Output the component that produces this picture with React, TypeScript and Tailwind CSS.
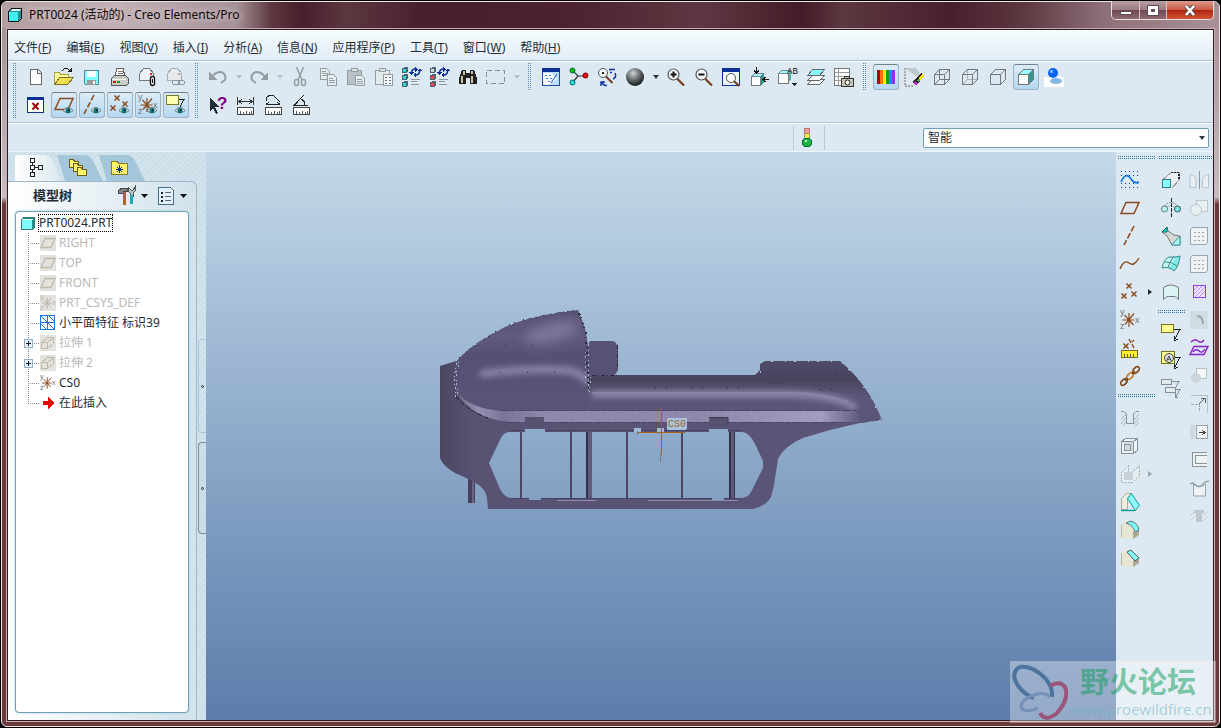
import type { ReactNode } from "react";

const BROWN = "#8b4a1c";
const SANS = "Liberation Sans, sans-serif";

function Glyph({ children, size = 20 }: { children: ReactNode; size?: number }) {
  return (
    <svg
      width={size}
      height={size}
      viewBox={`0 0 ${size} ${size}`}
      fill="none"
      shapeRendering="crispEdges"
      className="shrink-0 overflow-visible"
      aria-hidden="true"
    >
      {children}
    </svg>
  );
}

/* Small pieces shared by several icons */

function Eye() {
  return (
    <g shapeRendering="auto">
      <path d="M9 15.5q5-6 10 0q-5 5-10 0z" fill="#e8f4fa" stroke="#555" strokeWidth=".8" />
      <circle cx="14" cy="15.5" r="2.6" fill="#007a78" />
      <path d="M14 14.5h1.5v1.5h-1.5z" fill="#002" />
    </g>
  );
}

function Cross({ x, y }: { x: number; y: number }) {
  return (
    <path
      d={`M${x - 2.5} ${y - 2.5}l5 5m0-5l-5 5`}
      stroke={BROWN}
      strokeWidth="1.5"
      shapeRendering="auto"
    />
  );
}

function Ruler() {
  return (
    <g>
      <path d="M1.5 12.5h16v7h-16z" fill="#fff" stroke="#444" />
      <path d="M4.5 16v3M7.5 17v2M10.5 16v3M13.5 17v2M15.5 16v3" stroke="#555" />
    </g>
  );
}

function Csys({ gray = false }: { gray?: boolean }) {
  const c = gray ? "#b9b6a4" : BROWN;
  const t = gray ? "#b9b6a4" : "#68747c";
  return (
    <g shapeRendering="auto">
      <path d="M9 3v14M2.5 10h12M4.5 5l9 10M14 3.5l-9 11" stroke={c} strokeWidth="1.2" />
      <g fill={t} fontSize="9" fontFamily={SANS}>
        <text x="0" y="5">y</text>
        <text x="15" y="13">x</text>
        <text x="0" y="19">z</text>
      </g>
    </g>
  );
}

function Regen({ fills }: { fills: string[] }) {
  return (
    <g>
      {fills.map((fill, i) => (
        <g key={i}>
          <path d={`M.5 ${i * 7 + 1.5}h4v4h-4z`} fill={fill} stroke="#467" />
          <path d={`M2 ${i * 7 + 0.5}h3.5v4`} stroke="#567" />
        </g>
      ))}
      <path d="M9 12.5h9M9 14.5h6M9 17.5h8" stroke="#8c98a2" />
      <path d="M9.5 6q0-4 4-4M17.5 4q0 4-4 4" stroke="#0b2f9c" strokeWidth="1.6" shapeRendering="auto" />
      <path d="M13 0l3 2l-3 3zM14 5l-3 3l3 2zM15 4l3-3l2 3zM7 5h5l-2.5 3z" fill="#0b2f9c" />
    </g>
  );
}

function Lens({ children }: { children?: ReactNode }) {
  return (
    <g shapeRendering="auto">
      <path d="M11 11.5l7 7" stroke="#7a3b1e" strokeWidth="2.2" />
      <circle cx="7.5" cy="7.5" r="5.5" fill="#f4f8fa" stroke="#555" strokeWidth="1.2" />
      {children}
    </g>
  );
}

function Wire({ kind }: { kind: "wire" | "hidden" | "none" }) {
  return (
    <g stroke="#777">
      {kind !== "none" && (
        <path d="M7.5 2.5v10h10M7.5 12.5l-5 5" stroke={kind === "hidden" ? "#aab4ba" : "#777"} />
      )}
      <path d="M2.5 7.5h10v10h-10zM2.5 7.5l5-5h10l-5 5M17.5 2.5v10l-5 5" />
    </g>
  );
}

const icons: Record<string, ReactNode> = {
  new: <path d="M4.5 2.5h8l3 3v12h-11zM11.5 2.5v4h4" fill="#fff" stroke="#666" />,
  open: (
    <g>
      <path d="M.5 16.5v-11h5l1 2h8v3" fill="#ffff9a" stroke="#b0a040" />
      <path d="M.5 17.5l5-7h14l-6 7z" fill="#f0e050" stroke="#807020" />
      <path d="M8 4q4-5 8 0" stroke="#111" />
      <path d="M13 5h5v-4z" fill="#111" />
    </g>
  ),
  save: (
    <g>
      <path d="M2.5 3.5h14v14h-13l-1-1z" fill="#7fffff" stroke="#4b8a96" />
      <path d="M5 4h9v6h-9z" fill="#fff" />
      <path d="M5 13h9v5h-9z" fill="#999" />
      <path d="M11 14h2v3h-2z" fill="#fff" />
    </g>
  ),
  print: (
    <g>
      <path d="M6.5 1.5h7l1 8h-9z" fill="#fff" stroke="#666" />
      <path d="M8 4.5h5M8 6.5h5" stroke="#777" />
      <path d="M1.5 11.5l3-3h11l3 3v5l-2 2h-15z" fill="#c9ccc4" stroke="#555" />
      <path d="M2 12.5h14" stroke="#fff" />
      <path d="M3 14h3v2h-3z" fill="#d01010" />
      <path d="M7 14h3v2h-3z" fill="#10a010" />
    </g>
  ),
  mail: (
    <g>
      <path d="M1.5 13.5v-7l4-5h6l4 5v7z" fill="#eef1f3" stroke="#777" />
      <path d="M12 6h2v2h-2z" fill="#d22" />
      <rect x="12.5" y="9.5" width="4" height="9" rx="2" fill="#fff" stroke="#111" strokeWidth="1.4" shapeRendering="auto" />
      <path d="M14.5 12v4" stroke="#111" />
    </g>
  ),
  maillink: (
    <g>
      <path d="M1.5 13.5v-7l4-5h6l4 5v7z" fill="#e6eaed" stroke="#a4acb2" />
      <path d="M12 6h2v2h-2z" fill="#aaa" />
      <rect x="6.5" y="13.5" width="7" height="4" rx="2" stroke="#8c959b" />
      <rect x="12.5" y="13.5" width="6" height="4" rx="2" stroke="#8c959b" />
    </g>
  ),
  undo: (
    <g fill="#949da2">
      <path d="M4 10q3-5 9-5q6 2 4 8l-4 3" fill="none" stroke="#949da2" strokeWidth="2" shapeRendering="auto" />
      <path d="M1 5v8h8z" />
    </g>
  ),
  redo: (
    <g fill="#949da2">
      <path d="M16 10q-3-5-9-5q-6 2-4 8l4 3" fill="none" stroke="#949da2" strokeWidth="2" shapeRendering="auto" />
      <path d="M19 5v8h-8z" />
    </g>
  ),
  cut: (
    <g stroke="#949da2" strokeWidth="1.5" shapeRendering="auto">
      <path d="M6.5 0l5.5 13M13.5 0l-5.5 13" />
      <rect x="4.5" y="12.5" width="4" height="6" rx="2" />
      <rect x="11.5" y="12.5" width="4" height="6" rx="2" />
    </g>
  ),
  copy: (
    <g fill="#e6edf1" stroke="#949da2">
      <path d="M2.5 1.5h6l3 3v8h-9zM4 4.5h4M4 6.5h6M4 8.5h6" />
      <path d="M9.5 7.5h6l3 3v8h-9zM11 11.5h4M11 13.5h6M11 15.5h6" />
    </g>
  ),
  paste: (
    <g stroke="#949da2">
      <path d="M1.5 3.5h14v14h-14z" fill="#b9c1c6" />
      <path d="M5.5 1.5h6v3h-6z" fill="#dde3e7" />
      <path d="M9.5 8.5h6l3 3v7h-9zM11 12.5h5M11 14.5h6M11 16.5h6" fill="#e6edf1" />
    </g>
  ),
  pastespecial: (
    <g stroke="#949da2">
      <path d="M1.5 3.5h14v14h-14z" fill="#e3eaee" />
      <path d="M5.5 1.5h6v3h-6z" fill="#dde3e7" />
      <path d="M9.5 7.5h9v11h-9z" fill="#f2f6f8" />
      <path d="M11 10.5h2M15 10.5h2M11 13.5h2M15 13.5h2M11 16.5h2M15 16.5h2" stroke="#68737a" />
    </g>
  ),
  regen: <Regen fills={["#2fd6c8", "#2fd6c8", "#2fd6c8"]} />,
  regenmgr: <Regen fills={["#d6dadc", "#f04848", "#f04848"]} />,
  find: (
    <g>
      <path d="M4 3h4v3h4v-3h4l3 8v6h-7v-6h-4v6h-7v-6z" fill="#222" />
      <path d="M4 9v7M6 4v4M14 9v7M14 4v3" stroke="#c8c2a0" strokeWidth="2" />
    </g>
  ),
  selbox: <path d="M.5 3.5h18v13h-18z" stroke="#858f96" strokeDasharray="5 3" />,
  whatsthis: (
    <g>
      <path d="M2 3v13l3-3l3 6l2-1l-3-6h5z" fill="#222d38" />
      <text x="9" y="14" fontSize="17" fontWeight="bold" fontFamily={SANS} fill="#800080">?</text>
    </g>
  ),
  dist: (
    <g>
      <Ruler />
      <path d="M1.5 2v8M17.5 2v8M3 6.5h14M6 4l-3 2.5l3 2.5M13 4l3 2.5l-3 2.5" stroke="#333" />
    </g>
  ),
  arc: (
    <g>
      <Ruler />
      <path d="M2 4q2-5 8-3l6 6M2 9.5h14M5 7l-3 2.5M13 7l3 2.5M2.5 2v4" stroke="#222" />
    </g>
  ),
  angle: (
    <g>
      <Ruler />
      <path d="M12 0L2 10.5h14M9 4q4 2 4 6" stroke="#222" />
    </g>
  ),
  close: (
    <g>
      <path d="M1.5 2.5h16v15h-16z" fill="#fff" stroke="#12358c" />
      <path d="M1 2h17v3h-17z" fill="#0a2f96" />
      <path d="M6.5 8l6 6.5m0-6.5l-6 6.5" stroke="#a00000" strokeWidth="2" shapeRendering="auto" />
    </g>
  ),
  dplane: (
    <g>
      <path d="M6 3.5h13l-5 11h-13z" stroke={BROWN} strokeWidth="1.5" shapeRendering="auto" />
      <Eye />
    </g>
  ),
  daxis: (
    <g>
      <path d="M12 0L2 19" stroke={BROWN} strokeWidth="1.6" strokeDasharray="6 2" shapeRendering="auto" />
      <Eye />
    </g>
  ),
  dpoint: (
    <g>
      <Cross x={7} y={3} />
      <Cross x={3} y={13} />
      <Cross x={15} y={9} />
      <Eye />
    </g>
  ),
  dcsys: (
    <g>
      <Csys />
      <Eye />
    </g>
  ),
  dannot: (
    <g>
      <path d="M.5 .5h12v9h-12z" fill="#ffffb0" stroke="#7c7a20" />
      <path d="M13 4.5h5l-4 7" stroke="#222" />
      <Eye />
    </g>
  ),
  repaint: (
    <g>
      <path d="M1.5 1.5h17v17h-17z" fill="#b9dcff" stroke="#1b4ea0" />
      <path d="M1 1h18v4h-18z" fill="#0a2f96" />
      <path d="M2 6h8l6 6l-8 6h-6z" fill="#f6fbff" />
      <path d="M16 7l-6 9" stroke="#1e50a0" shapeRendering="auto" />
      <path d="M4 8.5h2M8 8.5h2M5 11.5h2M9 11.5h2M7 14.5h2" stroke="#3c8ae0" />
    </g>
  ),
  spin: (
    <g shapeRendering="auto">
      <path d="M4 4l5 5h8M9 9l-5 6" stroke="#333" strokeWidth="1.2" />
      <circle cx="3.5" cy="3.5" r="2.5" fill="#10c010" stroke="#063" />
      <circle cx="16.5" cy="8.5" r="2.5" fill="#f01010" stroke="#600" />
      <circle cx="3.5" cy="15.5" r="2.5" fill="#20e0d8" stroke="#066" />
    </g>
  ),
  orient: (
    <g shapeRendering="auto">
      <path d="M8.5 9l7 7" stroke="#7a3b1e" strokeWidth="2" />
      <circle cx="6" cy="6" r="4.5" fill="#eef3f5" stroke="#555" />
      <path d="M5 5h2v2h-2z" fill="#222" />
      <path d="M12 2.5h6M13 5.5h2M16 12q4-2 2-6M5 15q1 4 5 3.5M4 19v-4h4" stroke="#0b2f9c" strokeWidth="1.4" />
    </g>
  ),
  sphere: <circle cx="10" cy="10" r="9" fill="url(#ballShade)" shapeRendering="auto" />,
  zoomin: <Lens><path d="M4.5 7.5h6M7.5 4.5v6" stroke="#111" strokeWidth="2" /></Lens>,
  zoomout: <Lens><path d="M4.5 7.5h6" stroke="#111" strokeWidth="2" /></Lens>,
  refit: (
    <g>
      <path d="M.5 1.5h17v17h-17z" fill="#eaf6fc" stroke="#0a2f96" />
      <path d="M0 1h18v4h-18z" fill="#0a2f96" />
      <g shapeRendering="auto">
        <path d="M12 14l5 5" stroke="#7a3b1e" strokeWidth="2.2" />
        <circle cx="9" cy="11" r="4.5" fill="#fff" stroke="#555" />
      </g>
    </g>
  ),
  reorient: (
    <g>
      <path d="M1.5 9.5h9v9h-9z" fill="#fff" stroke="#777" />
      <path d="M1.5 9.5l3-3h9l-3 3z" fill="#aef6f6" stroke="#689" />
      <path d="M13.5 6.5v9l-3 3v-9z" fill="#249a90" />
      <path d="M6.5 0v6M4 3.5l2.5 3l2.5-3M19 12.5h-6M16 10l-3 2.5l3 2.5" stroke="#111" strokeWidth="1.3" />
    </g>
  ),
  views: (
    <g>
      <path d="M.5 6.5h10v10h-10z" fill="#fff" stroke="#777" />
      <path d="M.5 6.5l3-3h9l-2 3z" fill="#9ff" stroke="#789" />
      <path d="M12.5 4v9l-2 3v-9z" fill="#5aa" />
      <text x="9" y="7" fontSize="9" fontFamily="Liberation Mono, monospace" fill="#111">AB</text>
      <path d="M14 16h5l-2.5 3z" fill="#223" />
    </g>
  ),
  layers: (
    <g stroke="#666">
      <path d="M1.5 17.5l5-5h12l-5 5z" fill="#fff" />
      <path d="M1.5 13.5l5-5h12l-5 5z" fill="#fff" />
      <path d="M1.5 8.5l5-6h12l-5 6z" fill="#8ff" />
    </g>
  ),
  viewmgr: (
    <g>
      <path d="M.5 1.5h15v17h-15z" fill="#fff" stroke="#777" />
      <path d="M1 5.5h14M1 9.5h14M1 13.5h14M4.5 2v16" stroke="#999" />
      <path d="M7.5 11.5h12v8h-12zM10.5 11v-1.5h5v2" fill="#c9c8b8" stroke="#333" />
      <circle cx="13.5" cy="15.5" r="2.5" fill="#fff" stroke="#222" shapeRendering="auto" />
    </g>
  ),
  spectrum: (
    <g>
      <path d="M1 3h3v14h-3z" fill="#a01010" />
      <path d="M4 3h3v14h-3z" fill="#ff7000" />
      <path d="M7 3h3v14h-3z" fill="#ffee00" />
      <path d="M10 3h3v14h-3z" fill="#10a020" />
      <path d="M13 3h3v14h-3z" fill="#1090ff" />
      <path d="M16 3h3v14h-3z" fill="#9030f0" />
    </g>
  ),
  eraser: (
    <g>
      <path d="M0 1h11l7 6l-3 4z" fill="#b3bbbf" opacity=".7" />
      <path d="M1 1v18h8" stroke="#aaa" strokeDasharray="2 1" strokeWidth="2" />
      <path d="M9 15l8-9l3 3l-8 10z" fill="#222" />
      <path d="M15 10l3-3l2 2l-4 4z" fill="#ffe000" />
      <path d="M9 16l2-2l3 2l-2 3z" fill="#c020c0" />
      <path d="M13 13l2-2l1 2l-2 2z" fill="#40c040" />
    </g>
  ),
  wireframe: <Wire kind="wire" />,
  hiddenline: <Wire kind="hidden" />,
  nohidden: <Wire kind="none" />,
  shaded: (
    <g stroke="#777">
      <path d="M2.5 7.5h10v10h-10z" fill="#fff" />
      <path d="M2.5 7.5l5-5h10l-5 5z" fill="#9ff" />
      <path d="M17.5 2.5v10l-5 5v-10z" fill="#2d9a94" />
    </g>
  ),
  realism: (
    <g shapeRendering="auto">
      <path d="M0 10h20v10h-20z" fill="#fff" />
      <ellipse cx="12" cy="14" rx="6" ry="3" fill="#82b3e2" />
      <circle cx="9" cy="6" r="5" fill="#0a66f0" />
      <circle cx="7.5" cy="4.5" r="1.5" fill="#8cf" />
    </g>
  ),

  sketch: (
    <g>
      {[1.5, 5.5, 13.5, 17.5].map((y) => (
        <path key={y} d={`M1 ${y}h18`} stroke="#183c9c" strokeDasharray="1 3" />
      ))}
      <path d="M1 12Q6 1 11 9Q14 14 19 12" stroke="#1078e8" strokeWidth="1.6" shapeRendering="auto" />
    </g>
  ),
  plane: <path d="M6 4.5h13l-5 11h-13z" stroke={BROWN} strokeWidth="1.5" shapeRendering="auto" />,
  axis: <path d="M14 0L4 19" stroke={BROWN} strokeWidth="1.6" strokeDasharray="6 2" shapeRendering="auto" />,
  curve: <path d="M0 15q4-10 9-6t10-5" stroke={BROWN} strokeWidth="1.4" shapeRendering="auto" />,
  points: (
    <g>
      <Cross x={9} y={4} />
      <Cross x={4} y={14} />
      <Cross x={14} y={12} />
    </g>
  ),
  csys: <Csys />,
  field: (
    <g>
      <path d="M1.5 12.5h16v7h-16z" fill="#ffee30" stroke="#777020" />
      <path d="M4.5 16v3M7.5 16v3M10.5 16v3M13.5 16v3" stroke="#555" />
      <Cross x={6} y={8} />
      <path d="M9 1l2 4M12 6l2 4M14 2l-2 2" stroke={BROWN} strokeWidth="1.4" shapeRendering="auto" />
    </g>
  ),
  chain: (
    <g stroke="#7a3f10" strokeWidth="1.5" shapeRendering="auto">
      <ellipse cx="4" cy="16" rx="4" ry="2.3" transform="rotate(-45 4 16)" />
      <ellipse cx="10" cy="10" rx="4" ry="2.3" transform="rotate(-45 10 10)" stroke="#c07a28" />
      <ellipse cx="16" cy="4" rx="4" ry="2.3" transform="rotate(-45 16 4)" />
      <path d="M5 15l3-3M12 8l3-3" />
    </g>
  ),
  hole: (
    <g stroke="#a9b3ba" shapeRendering="auto">
      <path d="M1 16l5-6M1 12l5-6M3 18l3-4M14 16l5-6M14 12l5-6M15 18l4-4" />
      <path d="M1 3.5h3l2.500 2.500v9.500h7v-9.500l2.500-2.500h3" stroke="#87939a" />
    </g>
  ),
  shell: (
    <g stroke="#87939a">
      <path d="M1.5 5.5l4-3h12v12l-4 3h-12z" fill="#eef2f4" />
      <path d="M1.5 5.5h12v12M13.5 5.5l4-3M4.5 8.5h6v6h-6z" fill="#d3dade" />
    </g>
  ),
  rib: (
    <g stroke="#a5b0b7">
      <path d="M1.5 8.5l7-7v10l11-10v10l-7 7h-11z" fill="#e6ecef" strokeDasharray="2 1" />
      <path d="M4 8h9v8h-9z" fill="#c6d0d6" stroke="none" />
    </g>
  ),
  draft: (
    <g shapeRendering="auto">
      <path d="M1.5 6.5l5-5h5l-4 5v11h-6z" fill="#eeeede" stroke="#a9a996" />
      <path d="M7.5 6.5l4-5l8 12l-4 5z" fill="#8ffcfc" stroke="#0b9a9a" />
      <path d="M1 18.5h14" stroke="#0b9a9a" strokeWidth="1.4" />
    </g>
  ),
  round: (
    <g shapeRendering="auto">
      <path d="M1 5l6-4q10 1 12 9v5l-6 4l-12-1z" fill="#e6e6d2" />
      <path d="M13 12l6-2v5l-6 4z" fill="#a9a996" />
      <path d="M6 3l5-2q7 2 8 9l-4 2q-2-7-9-9z" fill="#7ffcfc" stroke="#5a7a7a" />
      <path d="M1.5 5v12" stroke="#b9b9a4" />
    </g>
  ),
  chamfer: (
    <g shapeRendering="auto">
      <path d="M1 5l6-4l4 1l8 8v5l-6 4l-12-1z" fill="#e6e6d2" />
      <path d="M13 13l6-3v5l-6 4z" fill="#a9a996" />
      <path d="M7 4l4-2l8 8l-4 3z" fill="#7ffcfc" stroke="#4a5a5a" />
      <path d="M1.5 5v12" stroke="#b9b9a4" />
    </g>
  ),
  extrude: (
    <g>
      <path d="M1.5 9.5l9-7h8v7l-8 9" stroke="#999" fill="#e9f3f6" />
      <path d="M10 2.5h8v7" stroke="#222" strokeDasharray="2 1" strokeWidth="1.4" />
      <path d="M1.5 9.5h8v8h-8z" fill="#8ff" stroke="#357a80" />
    </g>
  ),
  revolve: (
    <g shapeRendering="auto">
      <path d="M3 8q7-7 14 0M3 10q7-5 14 2" stroke="#888" strokeDasharray="2 1" />
      <circle cx="3.5" cy="11" r="3" fill="#bff8f8" stroke="#577" />
      <circle cx="16.5" cy="11" r="3" fill="#7fe8e8" stroke="#355" />
      <path d="M10.5 0v19" stroke="#222" strokeDasharray="4 1" />
    </g>
  ),
  sweep: (
    <g shapeRendering="auto">
      <path d="M1 6l5-5l1 4l6 4l6 1v9h-8l-5-9z" fill="#d6d6d6" stroke="#777" />
      <path d="M11 18.5l8-8.5v9h-8z" fill="#aff8f8" stroke="#399" />
      <path d="M1 6l5-5v5z" fill="#1fd8d0" stroke="#066" />
    </g>
  ),
  boundary: (
    <g shapeRendering="auto">
      <path d="M1 14q2-9 7-11q5 1 11-1q-1 10-6 15q-5-5-12-3z" fill="#c2faf8" />
      <path d="M14 3q-1 6-6 11l5 3q5-6 6-15z" fill="#5fe6e0" opacity=".7" />
      <path d="M1 14q2-9 7-11q5 1 11-1q-1 10-6 15q-5-5-12-3zM4 8q6-1 12 4M7 14q1-6 6-12" stroke="#3a8a8a" />
    </g>
  ),
  style: (
    <path
      d="M2.5 17.5v-12q7-5 15 0v12q-2-3-4-3h-6q-3 0-5 3z"
      fill="#d9f4f2"
      stroke="#777"
      shapeRendering="auto"
    />
  ),
  note: (
    <g>
      <path d="M.5 2.5h12v8h-12z" fill="#ffff90" stroke="#75731c" />
      <path d="M13 7.5h6l-6 11M13 14v5l4-2" stroke="#222" />
    </g>
  ),
  noteprop: (
    <g>
      <path d="M.5 1.5h13v12h-13z" fill="#ffff90" stroke="#75731c" />
      <circle cx="8" cy="8" r="4.5" fill="#ddd" stroke="#444" shapeRendering="auto" />
      <text x="8" y="11" fontSize="8" textAnchor="middle" fontFamily={SANS} fill="#222">A</text>
      <path d="M14 7.5h5l-6 11M13 14v5l4-2" stroke="#222" />
    </g>
  ),
  notecopy: (
    <g stroke="#848f96">
      <path d="M.5 1.5h10v5h-10zM4.5 9.5h10v5h-10z" fill="#e4ebef" />
      <path d="M11 3.5h7l-3 5M15 11.5h4l-4 7M14 15v4h3" />
    </g>
  ),
  mirror: (
    <g stroke="#b9c3ca" shapeRendering="auto">
      <path d="M1 17.5v-13q6 1 6 6v7z" fill="#e9eff2" />
      <path d="M19.5 17.5v-13q-6 1-6 6v7z" fill="#e9eff2" />
      <path d="M10.5 1v18" stroke="#8a969d" />
    </g>
  ),
  merge: (
    <g stroke="#bcc6cd" fill="#e9eff2">
      <path d="M7.5 2.5h11v11h-11z" />
      <circle cx="7" cy="12" r="5.5" shapeRendering="auto" />
    </g>
  ),
  pattern: (
    <g>
      <path d="M1.5 3.5l2-2h15v15l-2 2h-15z" fill="#eef2f4" stroke="#98a3aa" />
      {[6.5, 10.5, 14.5].map((y) => (
        <path key={y} d={`M5 ${y}h10`} stroke="#98a3aa" strokeDasharray="2 2" />
      ))}
    </g>
  ),
  fill: (
    <g>
      <path d="M4.5 3.5h12v12h-12z" fill="#eee4fc" stroke="#8a3fe0" />
      <path d="M5 8l4-4M5 12l8-8M6 15l10-10M10 15l6-6" stroke="#b392ec" />
    </g>
  ),
  trim: (
    <g shapeRendering="auto">
      <path d="M1 1h18v18H1z" fill="#d2dce3" />
      <path d="M8 6q6 0 6 8" stroke="#98a4ab" strokeWidth="2" />
    </g>
  ),
  offset: (
    <g stroke="#8a1fc8" strokeWidth="1.4" shapeRendering="auto">
      <path d="M2 4q4-4 7-1t6-1" />
      <path d="M5 8.5h14l-4 8H1z" />
      <path d="M4 14q3-4 6-1t6-2" />
    </g>
  ),
  intersect: (
    <g>
      <path d="M7.5 2.5h10v10h-10z" fill="#f3f7f9" stroke="#b4bfc6" />
      <circle cx="7" cy="12" r="5" fill="#ccd6dc" shapeRendering="auto" />
    </g>
  ),
  extend: (
    <g stroke="#9ba6ad">
      <path d="M1.5 1.5h17v17" stroke="#b4bfc6" />
      <path d="M2 10.5h8M10.5 10v8" strokeDasharray="3 1" />
      <path d="M10 10l6-6M12 4.5h4v4" stroke="#59646b" />
    </g>
  ),
  move: (
    <g>
      <path d="M7.5 3.5h11v13h-11z" fill="#f3f7f9" stroke="#98a3aa" />
      <path d="M1 3h5v14h-5z" fill="#cfd8de" />
      <path d="M10 10.5h6M13 8l3 2.5l-3 2.5" stroke="#444" />
    </g>
  ),
  solidify: <path d="M17.5 2.5h-14v14h14M17.5 5.5h-11v8h11" fill="#eef2f4" stroke="#87939a" />,
  wrap: (
    <g shapeRendering="auto">
      <path d="M4.5 6v12h12v-12q-6 6-12 0z" fill="#eef2f4" stroke="#98a3aa" />
      <path d="M1 6l3-1q6 7 12-1l4-1" stroke="#87939a" strokeWidth="1.2" />
    </g>
  ),
  drill: (
    <g>
      <path d="M1 4h18v12h-18z" fill="#e3eaee" />
      <path d="M1 15l5-5M1 10l5-5M14 15l5-5M14 10l5-5" stroke="#c0cad0" />
      <path d="M5 4h10v3h-2v9h-6v-9h-2z" fill="#bdc7ce" />
    </g>
  ),
};

const names: Record<string, string> = {
  new: "新建", open: "打开", save: "保存", print: "打印", undo: "撤消", redo: "重做",
  cut: "剪切", copy: "复制", paste: "粘贴", find: "查找", close: "关闭",
};

function Tool({ id, on = false }: { id: string; on?: boolean }) {
  return (
    <button
      type="button"
      aria-label={names[id] ?? id}
      aria-pressed={on}
      className={
        on
          ? "m-px flex size-[26px] items-center justify-center rounded-[3px] border border-[#9db4c4] border-t-[#70808c] bg-linear-to-b from-[#dcecf8] to-[#b4d8f2]"
          : "m-px flex size-[26px] items-center justify-center"
      }
    >
      <Glyph>{icons[id]}</Glyph>
    </button>
  );
}

function Drop({ dim = false }: { dim?: boolean }) {
  return (
    <button type="button" aria-label="更多" className="flex h-7 w-[13px] items-center justify-center">
      <svg width="6" height="4" viewBox="0 0 6 4" aria-hidden="true">
        <path d="M0 0h6L3 4z" fill={dim ? "#b4bfc7" : "#2b3a44"} />
      </svg>
    </button>
  );
}

function Grip({ tall = false }: { tall?: boolean }) {
  return (
    <div
      className={
        (tall ? "h-14" : "h-7") +
        " mr-1.5 ml-1 w-1 bg-[conic-gradient(#5b8cab_25%,transparent_0)] bg-[size:2px_2px]"
      }
    />
  );
}

function GripH() {
  return (
    <div className="h-1 flex-1 bg-[conic-gradient(#2f729c_25%,transparent_0)] bg-[size:2px_2px]" />
  );
}

const menus = [
  ["文件", "F"], ["编辑", "E"], ["视图", "V"], ["插入", "I"], ["分析", "A"],
  ["信息", "N"], ["应用程序", "P"], ["工具", "T"], ["窗口", "W"], ["帮助", "H"],
];

function TitleBar() {
  return (
    <header className="flex h-[26px] shrink-0 items-start justify-between rounded-t-[5px] bg-[linear-gradient(90deg,#b39ea1_0,#c0b0b3_120px,#a39094_235px,#5d3740_270px,#47202b_300px,#5b3740_345px,#47202b_420px,#4b222e_560px,#5d3741_700px,#431b26_800px,#5b3740_840px,#47202b_950px,#5b3740_1020px,#8d6f77_1100px,#a88f97_1210px)]">
      <div className="flex h-[26px] items-center">
        <svg width="14" height="14" viewBox="0 0 14 14" shapeRendering="crispEdges" className="ml-1.5" aria-hidden="true">
          <path d="M.5 3.5l3-3h10v10l-3 3h-10z" fill="#2a8f8f" stroke="#111" />
          <path d="M2 3l2-2h9l-2 2z" fill="#dff" />
          <path d="M1 4h9v9h-9z" fill="#3ff0f0" />
        </svg>
        <h1 className="ml-[7px] text-xs text-[#0c0506] [text-shadow:0_0_6px_#d8cccf,0_0_10px_#d8cccf]">
          PRT0024 (活动的) - Creo Elements/Pro
        </h1>
      </div>
      <div className="-mt-px mr-[5px] flex h-[19px] overflow-hidden rounded-b-[5px] border border-t-0 border-[#e9dcdf]">
        <button type="button" aria-label="最小化" className="flex w-7 items-center justify-center border-r border-[#d5c3c7] bg-[linear-gradient(#b89fa5,#98797f_50%,#6f4a52_52%,#8d6a72)]">
          <span className="mt-1.5 h-1 w-3 border border-[#5c4a50] bg-white" />
        </button>
        <button type="button" aria-label="最大化" className="flex w-[27px] items-center justify-center border-r border-[#d5c3c7] bg-[linear-gradient(#b89fa5,#98797f_50%,#6f4a52_52%,#8d6a72)]">
          <span className="h-[9px] w-2.5 border-[3px] border-white bg-[#6b5057] outline outline-[#5c4a50]" />
        </button>
        <button type="button" aria-label="关闭" className="flex w-[46px] items-center justify-center bg-[linear-gradient(#dc9c8c,#cc5a44_48%,#b0240c_52%,#d2563a)]">
          <svg width="12" height="11" viewBox="0 0 12 11" aria-hidden="true">
            <path d="M2 1l8 9M10 1l-8 9" stroke="#5a4a50" strokeWidth="4.5" />
            <path d="M2 1l8 9M10 1l-8 9" stroke="#fff" strokeWidth="2.6" />
          </svg>
        </button>
      </div>
    </header>
  );
}

function Toolbars() {
  return (
    <div className="flex h-[62px] shrink-0 items-start border-t border-b border-t-white border-b-[#aac4d6] bg-[#dce9f2] pt-px">
      <Grip tall />
      <div>
        <div className="flex">
          {["new", "open", "save", "print", "mail", "maillink"].map((id) => <Tool key={id} id={id} />)}
        </div>
        <div className="flex">
          <Tool id="close" />
          {["dplane", "daxis", "dpoint", "dcsys", "dannot"].map((id) => <Tool key={id} id={id} on />)}
        </div>
      </div>
      <Grip tall />
      <div>
        <div className="flex">
          <Tool id="undo" />
          <Drop dim />
          <Tool id="redo" />
          <Drop dim />
          {["cut", "copy", "paste", "pastespecial", "regen", "regenmgr", "find", "selbox"].map((id) => (
            <Tool key={id} id={id} />
          ))}
          <Drop dim />
        </div>
        <div className="flex">
          {["whatsthis", "dist", "arc", "angle"].map((id) => <Tool key={id} id={id} />)}
        </div>
      </div>
      <Grip />
      <div className="flex">
        {["repaint", "spin", "orient", "sphere"].map((id) => <Tool key={id} id={id} />)}
        <Drop />
        {["zoomin", "zoomout", "refit", "reorient", "views", "layers", "viewmgr"].map((id) => (
          <Tool key={id} id={id} />
        ))}
      </div>
      <Grip />
      <div className="flex">
        <Tool id="spectrum" on />
        {["eraser", "wireframe", "hiddenline", "nohidden"].map((id) => <Tool key={id} id={id} />)}
        <Tool id="shaded" on />
        <Tool id="realism" />
      </div>
    </div>
  );
}

function StatusBar() {
  return (
    <div className="flex h-[29px] shrink-0 items-center justify-end border-t border-b border-t-white border-b-[#eef5f9] bg-[#dce9f2] pr-1">
      <div className="mr-[98px] flex h-6 w-8 items-center justify-center border-x border-[#b8cad6] pr-1">
        <svg width="12" height="20" viewBox="0 0 12 20" shapeRendering="crispEdges" aria-hidden="true">
          <path d="M3.5 .5h5v5h-5z" fill="#f09a9a" stroke="#b77" />
          <path d="M3.5 5.5h5v5h-5z" fill="#f6ee40" stroke="#996" />
          <circle cx="6" cy="14.5" r="4.5" fill="#1fb040" stroke="#064" />
          <path d="M4 12h2v2h-2z" fill="#bfc" />
        </svg>
      </div>
      <div className="relative flex w-[286px]">
        <select
          aria-label="过滤器"
          defaultValue="智能"
          className="h-5 w-full appearance-none rounded-[2px] border border-[#6d9fb9] bg-white pl-1 text-xs text-[#222d38]"
        >
          <option>智能</option>
        </select>
        <svg width="6" height="4" viewBox="0 0 6 4" className="pointer-events-none absolute top-2 right-1" aria-hidden="true">
          <path d="M0 0h6L3 4z" fill="#2b3a44" />
        </svg>
      </div>
    </div>
  );
}

const treeRows = [
  { label: "RIGHT", icon: "plane", gray: true },
  { label: "TOP", icon: "plane", gray: true },
  { label: "FRONT", icon: "plane", gray: true },
  { label: "PRT_CSYS_DEF", icon: "csys", gray: true },
  { label: "小平面特征 标识39", icon: "facet" },
  { label: "拉伸 1", icon: "extrude", gray: true, open: true },
  { label: "拉伸 2", icon: "extrude", gray: true, open: true },
  { label: "CS0", icon: "csys" },
  { label: "在此插入", icon: "insert", last: true },
];

function TreeIcon({ icon, gray }: { icon: string; gray?: boolean }) {
  return (
    <Glyph size={16}>
      {gray && <path d="M0 0h16v16H0z" fill="#e3e2df" />}
      {icon === "plane" && (
        <path d="M5 3.5h10l-4 9h-10z" stroke="#bdbba8" strokeWidth="1.3" shapeRendering="auto" />
      )}
      {icon === "csys" && <g transform="scale(.8)"><Csys gray={gray} /></g>}
      {icon === "facet" && (
        <path d="M.5 .5h14v14H.5zM7.5 0v15M0 7.5h15M0 0l15 15M8 0l7 7M0 8l7 7" stroke="#1878e0" />
      )}
      {icon === "extrude" && (
        <path d="M1.5 7.5h6v6h-6zM1.5 7.5l6-5h6v6l-6 5M7.5 7.5l6-5" stroke="#bdbba8" />
      )}
      {icon === "insert" && <path d="M3 6h5v-4l6 6l-6 6v-4h-5z" fill="#e80000" />}
    </Glyph>
  );
}

function Arrow() {
  return (
    <svg width="7" height="4" viewBox="0 0 7 4" aria-hidden="true">
      <path d="M0 0h7L3.5 4z" fill="#111" />
    </svg>
  );
}

function ModelTree() {
  return (
    <aside className="flex w-[198px] shrink-0 bg-[repeating-linear-gradient(135deg,#cbdfea_0_2px,#d3e4ed_2px_4px)]">
      <div className="flex w-[189px] flex-col">
        <div className="flex h-[29px] items-end pt-[3px] pl-[7px]" role="tablist">
          <button type="button" role="tab" aria-selected="true" aria-label="模型树" className="z-10 flex h-[26px] w-[46px] items-center rounded-tl-[3px] bg-linear-to-r from-white to-[#dbe8ef] pl-3 [clip-path:polygon(0_0,32px_0,37px_4px,100%_100%,0_100%)]">
            <Glyph>
              <path d="M3.5 .5h4v4h-4zM3.5 7.5h4v4h-4zM3.5 14.5h4v4h-4zM11.5 7.5h4v4h-4zM5.5 5v2M5.5 12v2M8 9.5h3" stroke="#222" />
            </Glyph>
          </button>
          <button type="button" role="tab" aria-label="文件夹浏览器" className="-ml-1 flex h-[26px] w-[46px] items-center bg-[#a3c6da] pl-[11px] [clip-path:polygon(0_0,30px_0,35px_4px,100%_100%,8px_100%)]">
            <Glyph>
              {[0, 4, 8].map((n) => (
                <path key={n} d={`M${n + 1.5} ${n + 1.5}h4l1 2h4v6h-9z`} fill="#fff36b" stroke="#6e5a10" />
              ))}
            </Glyph>
          </button>
          <button type="button" role="tab" aria-label="收藏夹" className="-ml-1 flex h-[26px] w-[46px] items-center bg-[#a3c6da] pl-2.5 [clip-path:polygon(0_0,30px_0,35px_4px,100%_100%,8px_100%)]">
            <Glyph>
              <path d="M2.5 16.5v-13h6l1 2h9v11z" fill="#fff36b" stroke="#8a7a20" />
              <path d="M10.5 7v8M7 11.5h7M8 9l5 5M13 9l-5 5" stroke="#12308c" />
            </Glyph>
          </button>
        </div>
        <div className="flex flex-1 flex-col rounded-tr-md border-t border-r border-[#9dbaca] bg-[linear-gradient(90deg,#fff_0,#f4f8fa_40px,#d2e3ec_180px)] px-[7px] pb-[7px]">
          <div className="flex h-[29px] items-center pr-0.5 pb-0.5 pl-[18px] text-[#222d38]">
            <h2 className="flex-1 text-[13px] font-bold">模型树</h2>
            <button type="button" aria-label="设置" className="flex items-center gap-1">
              <Glyph>
                <path d="M1 5l4-3h5v3h-3l-1 2h-5z" fill="#888" stroke="#444" />
                <path d="M6 6h3v13h-3z" fill="#a8661f" />
                <path d="M11 1v4l2 2v3h3v-3l2-2v-4l-2 3h-2z" fill="#b8c8cc" stroke="#555" />
                <path d="M13 9h3v9h-3z" fill="#20a8b8" />
              </Glyph>
              <Arrow />
            </button>
            <button type="button" aria-label="显示" className="ml-2 flex items-center gap-1">
              <Glyph>
                <path d="M2.5 1.5h12l3 3v14h-15z" fill="#e4f1fb" stroke="#446a8c" />
                <path d="M5 6.5h2M5 10.5h2M5 14.5h2" stroke="#123" strokeWidth="2" />
                <path d="M9 6.5h6M9 10.5h6M9 14.5h6" stroke="#568" />
              </Glyph>
              <Arrow />
            </button>
          </div>
          <div className="flex-1 rounded-[4px] border border-[#6d9fb9] bg-white pt-px text-xs text-[#222d38] shadow-[0_0_2px_#9fc0d2]">
            <div className="flex h-5 items-center pl-[5px]">
              <svg width="14" height="13" viewBox="0 0 14 13" shapeRendering="crispEdges" aria-hidden="true">
                <path d="M.5 2.5l2-2h11v10l-2 2h-11z" fill="#1e8f8c" stroke="#377" />
                <path d="M1 3h10v9h-10z" fill="#7ffcfc" />
                <path d="M1 2.5l1-1h11l-1 1z" fill="#e0ffff" />
              </svg>
              <span className="ml-[3px] border border-dotted border-black leading-4">PRT0024.PRT</span>
            </div>
            <ul>
              {treeRows.map((row) => (
                <li key={row.label} className="flex h-5 items-center">
                  <svg width="24" height="20" viewBox="0 0 24 20" shapeRendering="crispEdges" fill="none" aria-hidden="true">
                    <path d={row.last ? "M12.5 0v10M12 10.5h11" : "M12.5 0v20M14 10.5h9"} stroke="#8c8c8c" strokeDasharray="1 1" />
                    {row.open && (
                      <g>
                        <rect x="8.5" y="6.5" width="8" height="8" rx="1" fill="#e8f1f7" stroke="#8fb2c8" />
                        <path d="M10 10.5h5M12.5 8v5" stroke="#123" />
                      </g>
                    )}
                  </svg>
                  <TreeIcon icon={row.icon} gray={row.gray} />
                  <span className={row.gray ? "ml-[3px] text-[#b9b9b9]" : "ml-[3px]"}>{row.label}</span>
                </li>
              ))}
            </ul>
          </div>
        </div>
      </div>
      {/* splitter handles */}
      <div className="flex flex-1 flex-col pl-px">
        <div className="mt-[187px] flex h-[94px] items-center justify-center rounded-l-[4px] border border-r-0 border-[#a9c6d6]">
          <span className="size-[3px] rounded-full border border-[#222d38]" />
        </div>
        <div className="mt-[9px] flex h-[92px] items-center justify-center rounded-l-[4px] border border-r-0 border-[#7d8c96] bg-[#cbdde8]">
          <span className="size-[3px] rounded-full border border-[#222d38]" />
        </div>
      </div>
    </aside>
  );
}

function Viewport() {
  return (
    <main className="min-w-0 flex-1 bg-linear-to-b from-[#c4d9e9] to-[#5c7dab]">
      <svg viewBox="206 152 910 568" className="block h-full w-full" role="img" aria-label="PRT0024">
        <defs>
          <linearGradient id="hood" x1="0" y1="0" x2="0" y2="1">
            <stop offset="0" stopColor="#55506f" />
            <stop offset=".25" stopColor="#605b7e" />
            <stop offset=".45" stopColor="#565172" />
            <stop offset="1" stopColor="#5a5577" />
          </linearGradient>
          <linearGradient id="deck" x1="0" y1="0" x2="0" y2="1">
            <stop offset="0" stopColor="#504b69" />
            <stop offset=".3" stopColor="#48435d" />
            <stop offset=".55" stopColor="#5b5677" />
            <stop offset="1" stopColor="#5b5678" />
          </linearGradient>
          <linearGradient id="side" x1="0" y1="0" x2="1" y2="0">
            <stop offset="0" stopColor="#4b4661" />
            <stop offset=".08" stopColor="#585373" />
            <stop offset="1" stopColor="#5b5677" />
          </linearGradient>
          <linearGradient id="band" x1="0" y1="0" x2="1" y2="0">
            <stop offset="0" stopColor="#6c6689" />
            <stop offset=".06" stopColor="#958eb0" />
            <stop offset=".12" stopColor="#7a7496" />
            <stop offset=".22" stopColor="#8f88ab" />
            <stop offset=".6" stopColor="#8f88ab" />
            <stop offset=".9" stopColor="#a39cc0" />
            <stop offset="1" stopColor="#5c5778" />
          </linearGradient>
          <filter id="soft" x="-20%" y="-80%" width="140%" height="260%">
            <feGaussianBlur stdDeviation="3" />
          </filter>
          <filter id="softer" x="-40%" y="-120%" width="180%" height="340%">
            <feGaussianBlur stdDeviation="6" />
          </filter>
          <clipPath id="hoodClip">
            <path d="M458 360Q470 344 505 327Q535 314 578 310L585 328L588 345L589 411H500Q470 406 458 392z" />
          </clipPath>
          <clipPath id="deckClip">
            <path d="M588 375H755L760 361H840Q868 384 882 420L860 411H588z" />
          </clipPath>
        </defs>

        <path d="M468 476h7v27h-7z" fill="#464159" />
        <path d="M472 476h2v27h-2z" fill="#6a6588" />
        {/* body with the window opening */}
        <path
          fill="url(#side)"
          fillRule="evenodd"
          d="M440 366L456 361L460 390L500 405H760L882 420L860 423L830 430L803 438Q784 446 778 459L774 485L771 497Q766 506 753 509H488L487 498Q485 488 477 484Q465 477 455 473Q443 466 440 458zM508 432Q502 434 500 440L489 463L500 489Q504 497 511 498H529V500H541V498H712V500H724V498H740Q748 498 751 492L763 468V461L755 444Q749 432 742 432H728V429H709V432H545V429H525V432z"
        />
        {/* deck and rear block */}
        <path
          fill="url(#deck)"
          d="M588 375H755L760 370V364L765 361H840Q868 384 882 420L860 423H588z"
        />
        <path d="M588 345L590 341H613Q618 343 618 350V368Q618 375 610 376H588z" fill="#575273" />
        <path fill="url(#hood)" d="M456 362Q470 344 505 327Q535 314 578 310L585 328L588 345L590 412H500Q468 408 456 392z" />
        <g clipPath="url(#hoodClip)">
          <path d="M480 374Q530 368 562 370Q578 370 588 382" stroke="#a29bbf" strokeWidth="7" fill="none" filter="url(#soft)" opacity=".75" />
          <ellipse cx="552" cy="332" rx="28" ry="9" fill="#7d779c" filter="url(#softer)" transform="rotate(-16 552 332)" />
        </g>
        <g clipPath="url(#deckClip)">
          <path d="M592 394H790Q835 395 856 408" stroke="#a19abc" strokeWidth="5" fill="none" filter="url(#soft)" />
          <path d="M592 393H790Q820 393 848 402" stroke="#8b84a6" strokeWidth="2" fill="none" />
        </g>

        {/* belt line */}
        <path d="M455 390Q470 410 505 411H857L862 422H512Q472 420 455 390z" fill="url(#band)" />
        <path d="M500 410.5H860M505 422.5H850" stroke="#4b4561" strokeDasharray="9 2 4 3" shapeRendering="crispEdges" />
        <path d="M525 417h19v11h-19zM709 417h19v12h-19z" fill="#575272" />
        <path d="M709 417.5h19v7" stroke="#3a354b" fill="none" />
        <path d="M510 430.5H524M545 430.5H709M728 430.5H742M511 498.5H529M541 498.5H712M724 498.5H740" stroke="#464160" strokeDasharray="14 1 5 1" shapeRendering="crispEdges" />
        <path d="M557 500.5h39M648 500.5h90" stroke="#8f89aa" shapeRendering="crispEdges" />

        {/* pillars */}
        <g shapeRendering="crispEdges">
          <path d="M520 432h2v66h-2zM570 432h2v66h-2zM626 432h2v66h-2zM681 432h2v66h-2z" fill="#4b4663" />
          <path d="M586 432h6v66h-6zM729 432h6v66h-6z" fill="#605b7e" />
          <path d="M586 432h2v66h-2zM729 432h2v66h-2zM734 432h1v66h-1z" fill="#353046" />
        </g>

        {/* ragged mesh edges */}
        <g fill="none" shapeRendering="crispEdges">
          <path d="M459 358Q475 342 507 326Q535 314 577 310.5" stroke="#2e293c" strokeDasharray="1 5 1 8" />
          <path d="M460 357Q475 342 507 326Q535 314 577 310" stroke="#aac3d9" strokeDasharray="1 4 2 7" />
          <path d="M579 313L586 333L587 360L589 390" stroke="#2e293c" strokeWidth="2" strokeDasharray="2 3 1 4" />
          <path d="M588 340V392M585 352V385M591 377l-2 15" stroke="#a9c4dc" strokeDasharray="1 3 2 4" />
          <path d="M457 363L454 376L456 397" stroke="#a9c4dc" strokeDasharray="2 3 1 2" />
          <path d="M459 362L456 376L458 397" stroke="#a9c4dc" strokeDasharray="1 2 2 4" />
          <path d="M456 396Q466 410 490 419" stroke="#332e42" strokeDasharray="5 2" />
          <path d="M592 375.5h26M617.5 345v26" stroke="#2e293c" strokeDasharray="4 2 1 2" />
          <path d="M762 361.5h78M760.5 362v12M842 363q27 24 39 57M880 420l-40 8" stroke="#a9c4dc" strokeDasharray="1 8 2 12" />
          <path d="M655 387.5h90M770 383.5h20M825 373.5h30M820 389.5h30" stroke="#252031" strokeDasharray="1 10 1 24" />
          <path d="M478 345.5h80M500 372.5h60" stroke="#322c42" strokeDasharray="1 26" />
        </g>

        {/* coordinate system CS0 */}
        <g shapeRendering="crispEdges">
          <path d="M634 428h7v4h-7zM657 428h7v4h-7z" fill="#9fbdd8" />
          <rect x="637" y="432" width="48" height="1" fill="#a8641c" />
          <rect x="661" y="408" width="1" height="47" fill="#8f6238" />
          <path d="M637.5 431v4M660.5 454v8" stroke="#777c86" />
          <rect x="667" y="418" width="20" height="12" rx="2" fill="#a5c3de" />
        </g>
        <text x="668" y="427" fontSize="10" fontFamily="Liberation Mono, monospace" fill="#a8641c">CS0</text>
      </svg>
    </main>
  );
}

function SideArrow({ dim = false }: { dim?: boolean }) {
  return (
    <button type="button" aria-label="展开" className="flex w-[11px] items-center justify-center">
      <svg width="4" height="6" viewBox="0 0 4 6" aria-hidden="true">
        <path d="M0 0l4 3l-4 3z" fill={dim ? "#9aa6ae" : "#222d38"} />
      </svg>
    </button>
  );
}

function FeatureBars() {
  return (
    <nav aria-label="特征工具" className="flex w-[97px] shrink-0 bg-[#dce9f2] pt-1">
      <div className="w-[41px]">
        <div className="flex pr-0.5 pl-px"><GripH /></div>
        <div className="mt-1.5 flex flex-col">
          {["sketch", "plane", "axis", "curve", "points", "csys", "field", "chain"].map((id) => (
            <div key={id} className="flex h-7">
              <Tool id={id} />
              {id === "points" && <SideArrow />}
            </div>
          ))}
        </div>
        <div className="mt-1 mb-1.5 flex pr-0.5 pl-px"><GripH /></div>
        <div className="flex flex-col">
          {["hole", "shell", "rib", "draft", "round", "chamfer"].map((id) => (
            <div key={id} className="flex h-7">
              <Tool id={id} />
              {id === "rib" && <SideArrow dim />}
            </div>
          ))}
        </div>
      </div>
      <div className="flex-1">
        <div className="flex pl-px"><GripH /></div>
        <div className="mt-1.5 flex">
          <div className="flex w-7 flex-col">
            {["extrude", "revolve", "sweep", "boundary", "style"].map((id) => <Tool key={id} id={id} />)}
            <div className="my-1 flex"><GripH /></div>
            {["note", "noteprop", "notecopy"].map((id) => <Tool key={id} id={id} />)}
          </div>
          <div className="flex w-7 flex-col">
            {[
              "mirror", "merge", "pattern", "pattern", "fill", "trim", "offset",
              "intersect", "extend", "move", "solidify", "wrap", "drill",
            ].map((id, i) => <Tool key={i} id={id} />)}
          </div>
        </div>
      </div>
    </nav>
  );
}

function Watermark() {
  return (
    <div className="pointer-events-none absolute right-[5px] bottom-[5px] flex h-[62px] w-[206px] bg-white/35">
      <svg width="58" height="62" viewBox="0 0 58 62" fill="none" className="shrink-0" aria-hidden="true">
        <g opacity=".7">
          <path d="M42 36Q43 26 35 17Q22 4 10 6Q-1 12 9 26Q15 34 24 37" stroke="#2c5c8c" strokeWidth="4" />
          <path d="M40 36Q34 30 24 34Q8 40 12 48Q18 52 28 47" stroke="#6784b0" strokeWidth="3" />
          <path d="M40 25Q50 19 55 26Q60 38 46 53Q35 61 30 52" stroke="#9c3158" strokeWidth="4" />
        </g>
      </svg>
      <div className="flex flex-col">
        <span className="ml-3 text-[29px] leading-[38px] font-bold whitespace-nowrap text-[#0d9a58]/50 [font-family:'Noto_Sans_CJK_SC',sans-serif]">
          野火论坛
        </span>
        <span className="text-[15px] leading-5 whitespace-nowrap text-[#6ab0c0]/55 [font-family:'Open_Sans',sans-serif]">
          www.proewildfire.cn
        </span>
      </div>
    </div>
  );
}

export default function App() {
  return (
    <div className="relative h-screen min-h-[600px] bg-black p-px font-['Noto_Sans','Noto_Sans_CJK_SC',sans-serif]">
      <svg width="0" height="0" className="absolute" aria-hidden="true">
        <radialGradient id="ballShade" cx=".4" cy=".3" r=".7">
          <stop offset="0" stopColor="#d0d4d6" />
          <stop offset=".45" stopColor="#757a7d" />
          <stop offset="1" stopColor="#15181a" />
        </radialGradient>
      </svg>
      <div className="flex h-full flex-col rounded-[6px] border border-[#efe4e4] bg-[linear-gradient(#a08b90_0,#c9bdc1_195px,#6b3a3c_202px)]">
        <TitleBar />
        <div className="mx-1 mb-1 flex min-h-0 flex-1 flex-col border border-[#c4b0b2]">
          <div className="flex min-h-0 flex-1 flex-col border border-[#33191d] bg-[#dce9f2]">
            <nav className="flex h-[31px] shrink-0 items-center gap-[15px] border-b border-[#aac4d6] bg-linear-to-b from-[#f5fcfd] to-[#e3edf6] pt-1.5 pl-1.5 text-xs text-[#222d38]">
              {menus.map(([label, key]) => (
                <button type="button" key={key} className="whitespace-nowrap">
                  {label}(<u>{key}</u>)
                </button>
              ))}
            </nav>
            <Toolbars />
            <StatusBar />
            <div className="flex min-h-0 flex-1">
              <ModelTree />
              <Viewport />
              <FeatureBars />
            </div>
          </div>
        </div>
      </div>
      <Watermark />
    </div>
  );
}
